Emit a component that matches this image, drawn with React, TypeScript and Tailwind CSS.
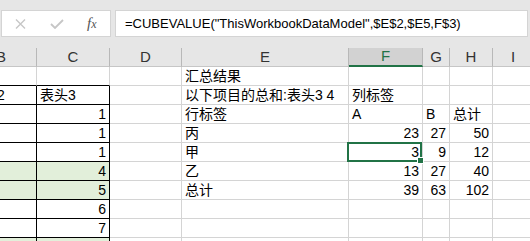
import React from 'react';

type Row = {
  cells: (string | number)[];
  green?: boolean;
};

// column widths from B to I (B is partly hidden on the left)
const GRID = 'grid grid-cols-[71px_73px_72px_167px_74px_27px_43px_41px_40px] ml-[-34px]';

const HEADERS = ['B', 'C', 'D', 'E', 'F', 'G', 'H', 'I', 'J'];

const ROWS: Row[] = [
  { cells: ['', '', '', '汇总结果', '', '', '', '', ''] },
  { cells: ['表头2', '表头3', '', '以下项目的总和:表头3 4', '列标签', '', '', '', ''] },
  { cells: ['', 1, '', '行标签', 'A', 'B', '总计', '', ''] },
  { cells: ['', 1, '', '丙', 23, 27, 50, '', ''] },
  { cells: ['', 1, '', '甲', 3, 9, 12, '', ''] },
  { cells: ['', 4, '', '乙', 13, 27, 40, '', ''], green: true },
  { cells: ['', 5, '', '总计', 39, 63, 102, '', ''], green: true },
  { cells: ['', 6, '', '', '', '', '', '', ''] },
  { cells: ['', 7, '', '', '', '', '', '', ''] },
  { cells: ['', 8, '', '', '', '', '', '', ''], green: true },
];

function Cell({
  value,
  row,
  col,
  green,
}: {
  value: string | number;
  row: number;
  col: number;
  green?: boolean;
}): React.ReactElement {
  const inTable = col <= 1; // columns B and C
  const num = typeof value === 'number';
  const selected = row === 4 && col === 4;
  const borderR = inTable && row >= 1 ? 'border-r-black' : 'border-r-[#d4d4d4]';
  const borderB = inTable ? 'border-b-black' : 'border-b-[#d4d4d4]';
  const bg = inTable && green ? 'bg-[#e2efda]' : 'bg-white';
  return (
    <div
      className={`relative flex h-[19px] items-end whitespace-nowrap border-r border-b px-[3px] pb-[1px] leading-[15px] ${borderR} ${borderB} ${bg} ${
        num ? 'justify-end' : 'justify-start'
      }`}
    >
      {value}
      {selected && (
        <div className="absolute -left-[2px] -top-[1px] right-0 -bottom-[1px] z-10 border-2 border-[#217346]">
          <div className="absolute -right-[4px] -bottom-[4px] h-[7px] w-[7px] border border-white bg-[#217346]" />
        </div>
      )}
    </div>
  );
}

export default function App(): React.ReactElement {
  return (
    <div className="h-[241px] w-[530px] overflow-hidden bg-white font-[family-name:Liberation_Sans,Noto_Sans_CJK_SC,sans-serif] text-black">
      {/* barra de fórmulas */}
      <div className="flex h-[48px] bg-[#e6e6e6] pt-[10px]">
        <div className="ml-[1px] flex h-[27px] w-[110px] items-center border border-[#d4d4d4] bg-white">
          <svg className="ml-[13px]" width="11" height="10" viewBox="0 0 11 10">
            <path d="M1 0.5 L10 9.5 M10 0.5 L1 9.5" stroke="#c6c6c6" strokeWidth="1.4" fill="none" />
          </svg>
          <svg className="ml-[24px]" width="14" height="10" viewBox="0 0 14 10">
            <path d="M1 5 L5 9 L13 1" stroke="#c6c6c6" strokeWidth="1.8" fill="none" />
          </svg>
          <span className="ml-[23px] font-[family-name:Liberation_Serif,serif] text-[15px] italic text-[#555]">
            f<span className="text-[12px]">x</span>
          </span>
        </div>
        <div className="ml-[4px] flex h-[27px] w-[413px] items-center border border-[#d4d4d4] bg-white pl-[9px] text-[13px]">
          =CUBEVALUE("ThisWorkbookDataModel",$E$2,$E5,F$3)
        </div>
      </div>

      {/* cabeçalho de colunas */}
      <div className={GRID}>
        {HEADERS.map((h) => (
          <div
            key={h}
            className={`flex h-[19px] items-center justify-center border-r border-r-[#b8b8b8] text-[15px] ${
              h === 'F'
                ? 'border-b-2 border-b-[#217346] bg-[#d2d2d2] text-[#217346]'
                : 'border-b border-b-[#c6c6c6] bg-[#e6e6e6] text-[#333]'
            }`}
          >
            {h}
          </div>
        ))}
      </div>

      {/* células */}
      <div className="text-[14px]">
        {ROWS.map((r, ri) => (
          <div key={ri} className={GRID}>
            {r.cells.map((v, ci) => (
              <Cell key={ci} value={v} row={ri} col={ci} green={r.green} />
            ))}
          </div>
        ))}
      </div>
    </div>
  );
}
